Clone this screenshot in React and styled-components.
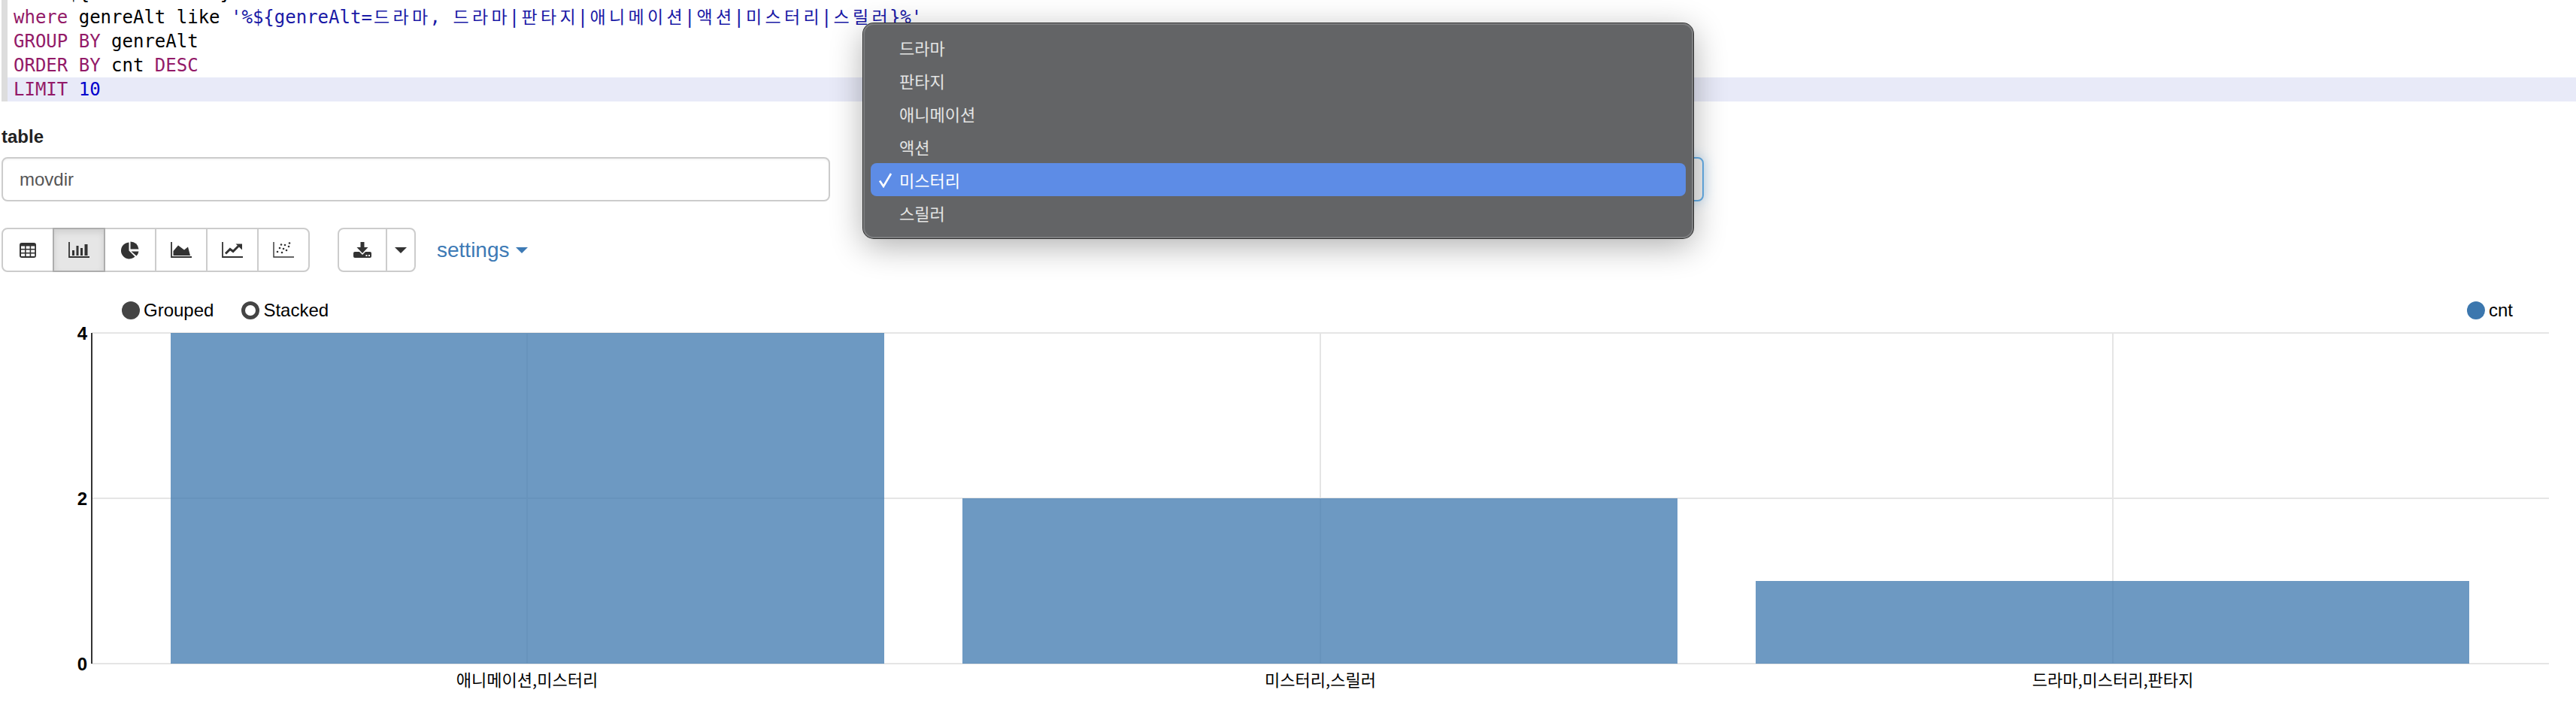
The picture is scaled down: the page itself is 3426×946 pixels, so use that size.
import React from "react";
import styled, { createGlobalStyle } from "styled-components";

const GlobalStyle = createGlobalStyle`
  html, body {
    margin: 0;
    padding: 0;
    background: #fff;
  }
  body {
    font-family: "Liberation Sans", "Noto Sans CJK KR", sans-serif;
    color: #333;
  }
`;

const KOREAN = /[\uac00-\ud7a3]/;

const Page = styled.div`
  position: relative;
  width: 3426px;
  height: 946px;
  overflow: hidden;
`;

const Editor = styled.div`
  display: flex;
  flex-direction: column;
  justify-content: flex-end;
  height: 135px;
  margin-left: 2px;
  border-left: 8px solid #dddddd;
  overflow: hidden;
  font-family: "DejaVu Sans Mono", "Liberation Mono", "Noto Sans CJK KR", monospace;
  font-size: 24px;
  line-height: 32px;
  color: #000;
`;

const CodeLine = styled.div`
  flex: none;
  height: 32px;
  padding-left: 8px;
  white-space: pre;
  background: ${(p) => (p.$current ? "#e8eaf8" : "transparent")};
`;

const Keyword = styled.span`
  color: #931a68;
`;

const Str = styled.span`
  color: #1a1aa6;
`;

const Num = styled.span`
  color: #0000cd;
`;

const Cell = styled.span`
  display: inline-block;
  width: 2ch;
  text-align: center;
  font-family: "Noto Sans CJK KR", sans-serif;
  font-size: 23px;
  line-height: 1;
`;

const Form = styled.div`
  display: grid;
  grid-template-columns: 1102px 1102px;
  column-gap: 60px;
  padding: 30px 0 0 2px;
`;

const Label = styled.label`
  display: block;
  margin-bottom: 10px;
  font-size: 24px;
  font-weight: 700;
  line-height: 34px;
  color: #222;
`;

const Field = styled.div`
  display: flex;
  align-items: center;
  justify-content: space-between;
  box-sizing: border-box;
  height: 59px;
  padding: 0 22px;
  border: 2px solid ${(p) => (p.$focused ? "#66afe9" : "#cccccc")};
  border-radius: 8px;
  background: ${(p) => (p.$focused ? "#f2f2f2" : "#fff")};
  box-shadow: ${(p) =>
    p.$focused
      ? "0 0 16px rgba(102, 175, 233, 0.45)"
      : "inset 0 2px 2px rgba(0, 0, 0, 0.04)"};
  font-size: 24px;
  color: #555;
`;

const Toolbar = styled.div`
  display: flex;
  align-items: center;
  margin: 35px 0 0 2px;
`;

const BtnGroup = styled.div`
  display: flex;
  margin-left: ${(p) => p.$offset || 0}px;
`;

const Btn = styled.div`
  display: flex;
  align-items: center;
  justify-content: center;
  box-sizing: border-box;
  width: ${(p) => p.$width || 70}px;
  height: 59px;
  margin-left: -2px;
  border: 2px solid ${(p) => (p.$active ? "#adadad" : "#cccccc")};
  background: ${(p) => (p.$active ? "#e6e6e6" : "#fff")};
  box-shadow: ${(p) => (p.$active ? "inset 0 4px 8px rgba(0, 0, 0, 0.1)" : "none")};
  z-index: ${(p) => (p.$active ? 1 : 0)};
  &:first-child {
    margin-left: 0;
    border-radius: 8px 0 0 8px;
  }
  &:last-child {
    border-radius: 0 8px 8px 0;
  }
`;

const Caret = styled.span`
  display: inline-block;
  width: 0;
  height: 0;
  border-left: ${(p) => p.$size}px solid transparent;
  border-right: ${(p) => p.$size}px solid transparent;
  border-top: ${(p) => p.$size}px solid ${(p) => p.$color};
`;

const SettingsLink = styled.div`
  display: flex;
  align-items: center;
  gap: 8px;
  margin-left: 28px;
  font-size: 28px;
  color: #3d7ab5;
`;

const LegendRow = styled.div`
  display: flex;
  align-items: center;
  justify-content: space-between;
  height: 24px;
  margin-top: 39px;
  margin-bottom: 5px;
  padding: 0 84px 0 162px;
`;

const LegendGroup = styled.div`
  display: flex;
  gap: 37px;
`;

const LegendItem = styled.div`
  display: flex;
  align-items: center;
  gap: 5px;
  font-size: 24px;
  line-height: 24px;
  color: #000;
`;

const Dot = styled.span`
  box-sizing: border-box;
  width: 24px;
  height: 24px;
  border-radius: 50%;
  border: ${(p) => (p.$hollow ? `5px solid ${p.$color}` : "none")};
  background: ${(p) => (p.$hollow ? "#fff" : p.$color)};
`;

const Chart = styled.svg`
  display: block;
`;

const Popup = styled.div`
  position: absolute;
  top: 31px;
  left: 1148px;
  box-sizing: border-box;
  width: 1104px;
  height: 286px;
  padding: 10px;
  border-radius: 14px;
  background: #636466;
  box-shadow: 0 0 0 1px #2e2e2e, inset 0 0 0 2px #7d7e80, 0 10px 44px rgba(0, 0, 0, 0.32);
`;

const Option = styled.div`
  position: relative;
  display: flex;
  align-items: center;
  height: 44px;
  padding-left: 38px;
  border-radius: 8px;
  background: ${(p) => (p.$selected ? "#5d8ce6" : "transparent")};
  font-family: "Noto Sans CJK KR", sans-serif;
  font-size: 22px;
  color: ${(p) => (p.$selected ? "#fff" : "#e4e4e4")};
`;

const Check = styled.svg`
  position: absolute;
  left: 10px;
  top: 13px;
`;

const Ink = "#333333";

const TableIcon = () => (
  <svg width="22" height="20" viewBox="0 0 22 20">
    <rect width="22" height="20" rx="3" fill={Ink} />
    {[4.5, 9.5, 14.5].flatMap((y) =>
      [2, 8.6, 15.2].map((x) => (
        <rect key={`${x}-${y}`} x={x} y={y} width="5" height="3.4" fill="#fff" />
      ))
    )}
  </svg>
);

const BarIcon = () => (
  <svg width="28" height="21" viewBox="0 0 28 21">
    <path d="M1 0V20H28" fill="none" stroke={Ink} strokeWidth="1.8" />
    <path d="M5 11h3v7H5zM10.5 5h3v13h-3zM16 8h3v10h-3zM21.5 3h4v15h-4z" fill={Ink} />
  </svg>
);

const PieIcon = () => (
  <svg width="24" height="24" viewBox="0 0 24 24">
    <path d="M10.5 12.5V1.5A11 11 0 1 0 18.5 20.5Z" fill={Ink} />
    <path d="M12.5 .5A11 11 0 0 1 23.5 10.5H12.5Z" fill={Ink} />
    <path d="M13.5 13.5H23.5A11 11 0 0 1 20.5 19.5Z" fill={Ink} />
  </svg>
);

const AreaIcon = () => (
  <svg width="28" height="21" viewBox="0 0 28 21">
    <path d="M1 0V20H28" fill="none" stroke={Ink} strokeWidth="1.8" />
    <path d="M3.5 18V12L10 4.5 18 10.5 23 6.5 26 18Z" fill={Ink} />
  </svg>
);

const LineIcon = () => (
  <svg width="28" height="21" viewBox="0 0 28 21">
    <path d="M1 0V20H28" fill="none" stroke={Ink} strokeWidth="1.8" />
    <path d="M5 15.5L11 9.5 15 12.5 22 5.5" fill="none" stroke={Ink} strokeWidth="3" />
    <path d="M18.5 2.5H27V10.5Z" fill={Ink} />
  </svg>
);

const ScatterIcon = () => (
  <svg width="28" height="21" viewBox="0 0 28 21">
    <path d="M1 0V20H28" fill="none" stroke={Ink} strokeWidth="1.4" />
    {[[6, 13], [9, 8], [12, 14], [14, 9], [16, 4], [18, 11], [21, 6], [22, 1.5], [11, 3.5]].map(([x, y]) => (
      <circle key={`${x}-${y}`} cx={x} cy={y} r="1.3" fill={Ink} />
    ))}
  </svg>
);

const DownloadIcon = () => (
  <svg width="24" height="21" viewBox="0 0 24 21">
    <path
      d="M2 13h6l4 4 4-4h6a2 2 0 0 1 2 2v4a2 2 0 0 1-2 2H2a2 2 0 0 1-2-2v-4a2 2 0 0 1 2-2Z"
      fill={Ink}
    />
    <path d="M9.5 0h5v7h5L12 15 4.5 7h5Z" fill={Ink} />
    <rect x="16.5" y="17" width="2" height="2" fill="#fff" />
    <rect x="20" y="17" width="2" height="2" fill="#fff" />
  </svg>
);

const chartIcons = [TableIcon, BarIcon, PieIcon, AreaIcon, LineIcon, ScatterIcon];

const genres = ["드라마", "판타지", "애니메이션", "액션", "미스터리", "스릴러"];

const bars = [
  { label: "애니메이션,미스터리", x: 227, width: 949, value: 4, center: 701 },
  { label: "미스터리,스릴러", x: 1280, width: 951, value: 2, center: 1756 },
  { label: "드라마,미스터리,판타지", x: 2335, width: 949, value: 1, center: 2810 },
];

// Ace gives each hangul syllable two monospace cells
const wide = (text) =>
  [...text].map((ch, i) => (KOREAN.test(ch) ? <Cell key={i}>{ch}</Cell> : ch));

const BAR_TOP = 13;
const BAR_BOTTOM = 453;
const valueY = (v) => BAR_BOTTOM - ((BAR_BOTTOM - BAR_TOP) * v) / 4;

const BarChart = () => (
  <Chart width="3426" height="516" viewBox="0 0 3426 516">
    {[0, 2, 4].map((v) => (
      <line key={v} x1="122" x2="3390" y1={valueY(v)} y2={valueY(v)} stroke="#e5e5e5" strokeWidth="2" />
    ))}
    {bars.map((b) => (
      <line key={b.center} x1={b.center} x2={b.center} y1={BAR_TOP} y2={BAR_BOTTOM} stroke="#e5e5e5" strokeWidth="2" />
    ))}
    {bars.map((b) => (
      <rect
        key={b.label}
        x={b.x}
        y={valueY(b.value)}
        width={b.width}
        height={BAR_BOTTOM - valueY(b.value)}
        fill="#3c77ae"
        fillOpacity="0.75"
      />
    ))}
    <line x1="122" x2="122" y1={BAR_TOP} y2={BAR_BOTTOM} stroke="#333" strokeWidth="2" />
    {[0, 2, 4].map((v) => (
      <text
        key={v}
        x="116"
        y={valueY(v) + 8.5}
        textAnchor="end"
        fontFamily="Liberation Sans, sans-serif"
        fontSize="24"
        fontWeight="700"
        fill="#000"
      >
        {v}
      </text>
    ))}
    {bars.map((b) => (
      <text
        key={b.label}
        x={b.center}
        y="483"
        textAnchor="middle"
        fontFamily="Noto Sans CJK KR, sans-serif"
        fontSize="22"
        fill="#000"
      >
        {b.label}
      </text>
    ))}
  </Chart>
);

const App = () => {
  return (
    <Page>
      <GlobalStyle />

      <Editor>
        <CodeLine>
          <Keyword>from</Keyword> ${"{"}
          <Keyword>table=movdir</Keyword>
          {"}"}
        </CodeLine>
        <CodeLine>
          <Keyword>where</Keyword> genreAlt like{" "}
          <Str>'%${"{"}genreAlt={wide("드라마, 드라마|판타지|애니메이션|액션|미스터리|스릴러")}{"}"}%'</Str>
        </CodeLine>
        <CodeLine>
          <Keyword>GROUP BY</Keyword> genreAlt
        </CodeLine>
        <CodeLine>
          <Keyword>ORDER BY</Keyword> cnt <Keyword>DESC</Keyword>
        </CodeLine>
        <CodeLine $current>
          <Keyword>LIMIT</Keyword> <Num>10</Num>
        </CodeLine>
      </Editor>

      <Form>
        <div>
          <Label>table</Label>
          <Field>movdir</Field>
        </div>
        <div>
          <Label>genreAlt</Label>
          <Field $focused>
            미스터리
            <Caret $size={6} $color="#555" />
          </Field>
        </div>
      </Form>

      <Toolbar>
        <BtnGroup>
          {chartIcons.map((Icon, i) => (
            <Btn key={i} $active={i === 1}>
              <Icon />
            </Btn>
          ))}
        </BtnGroup>
        <BtnGroup $offset={37}>
          <Btn $width={66}>
            <DownloadIcon />
          </Btn>
          <Btn $width={40}>
            <Caret $size={8} $color="#333" />
          </Btn>
        </BtnGroup>
        <SettingsLink>
          settings
          <Caret $size={8} $color="#3d7ab5" />
        </SettingsLink>
      </Toolbar>

      <LegendRow>
        <LegendGroup>
          <LegendItem>
            <Dot $color="#444" />
            Grouped
          </LegendItem>
          <LegendItem>
            <Dot $color="#444" $hollow />
            Stacked
          </LegendItem>
        </LegendGroup>
        <LegendItem>
          <Dot $color="#3c77ae" />
          cnt
        </LegendItem>
      </LegendRow>

      <BarChart />

      <Popup>
        {genres.map((g) => (
          <Option key={g} $selected={g === "미스터리"}>
            {g === "미스터리" && (
              <Check width="20" height="20" viewBox="0 0 20 20">
                <path d="M2 10.5L7 18 17 1" fill="none" stroke="#fff" strokeWidth="2.6" />
              </Check>
            )}
            {g}
          </Option>
        ))}
      </Popup>
    </Page>
  );
};

export default App;
